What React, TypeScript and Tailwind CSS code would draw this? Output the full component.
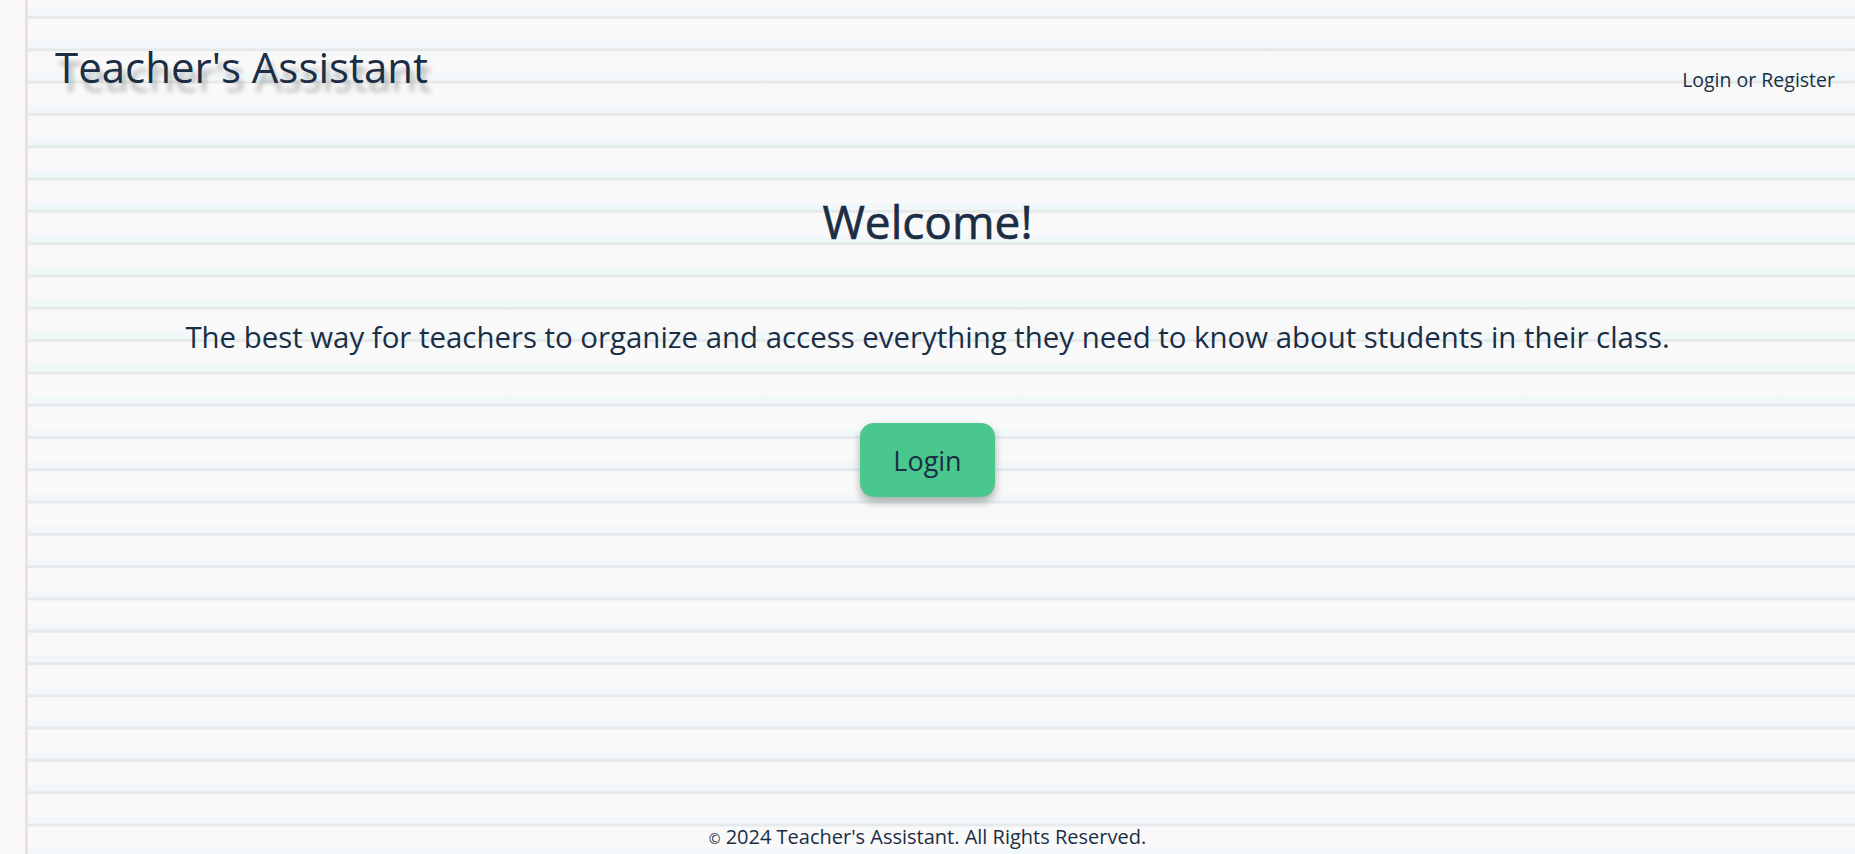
export default function App() {
  return (
    <div className="flex min-h-screen flex-col bg-[#f9f9f9] bg-[linear-gradient(to_right,#faf8f8_0px,#faf8f8_25px,#ebe1e4_25px,#ebe1e4_28px,transparent_28px),repeating-linear-gradient(to_bottom,#f9f9f9_0px,#f9f9f9_8px,#f2f8f9_10px,#f1f8f9_15.5px,#e6eaeb_16.5px,#e6eaeb_18.5px,#f9f9f9_19.5px,#f9f9f9_32.3px)] font-['Open_Sans',sans-serif] text-[#1b2e45]">
      {/* Header */}
      <header className="flex items-start justify-between pl-[55px] pr-[20px] pt-[46px]">
        <h1 className="text-[42px] font-medium leading-[42px] [text-shadow:4px_9px_5px_rgba(0,0,0,0.28)]">
          Teacher's Assistant
        </h1>
        <a href="#" className="mt-[22px] text-[19.5px] leading-[24px]">
          Login or Register
        </a>
      </header>

      {/* Main content */}
      <main className="flex flex-1 flex-col items-center pt-[101px]">
        <h2 className="text-[46px] font-medium leading-[56px] [-webkit-text-stroke:0.6px_#1b2e45]">Welcome!</h2>
        <p className="mt-[70px] text-[29.4px] leading-[36px]">
          The best way for teachers to organize and access everything they need to know about students in their class.
        </p>
        <button className="mt-[68px] h-[74px] w-[135px] rounded-[14px] bg-[#4ac78d] pt-[3px] text-[27px] shadow-[0_5px_8px_rgba(0,0,0,0.3)]">
          Login
        </button>
      </main>

      {/* Footer */}
      <footer className="pb-[3px] pt-[10px] text-center text-[20px] leading-[24px]">
        <span className="text-[14px]">©</span> 2024 Teacher's Assistant. All Rights Reserved.
      </footer>
    </div>
  );
}
